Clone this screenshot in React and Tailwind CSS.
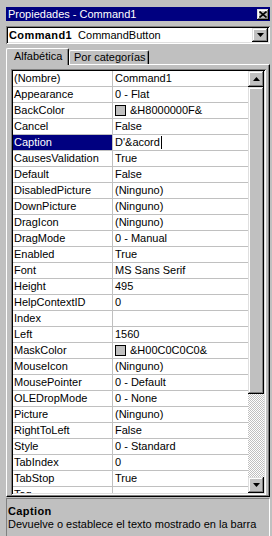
import React from 'react';

const rows = [
  ['(Nombre)', 'Command1'],
  ['Appearance', '0 - Flat'],
  ['BackColor', '&H8000000F&', true],
  ['Cancel', 'False'],
  ['Caption', "D'&acord", false, true],
  ['CausesValidation', 'True'],
  ['Default', 'False'],
  ['DisabledPicture', '(Ninguno)'],
  ['DownPicture', '(Ninguno)'],
  ['DragIcon', '(Ninguno)'],
  ['DragMode', '0 - Manual'],
  ['Enabled', 'True'],
  ['Font', 'MS Sans Serif'],
  ['Height', '495'],
  ['HelpContextID', '0'],
  ['Index', ''],
  ['Left', '1560'],
  ['MaskColor', '&H00C0C0C0&', true],
  ['MouseIcon', '(Ninguno)'],
  ['MousePointer', '0 - Default'],
  ['OLEDropMode', '0 - None'],
  ['Picture', '(Ninguno)'],
  ['RightToLeft', 'False'],
  ['Style', '0 - Standard'],
  ['TabIndex', '0'],
  ['TabStop', 'True'],
  ['Tag', ''],
];

// raised 3d button look
const raised =
  'bg-[#c0c0c0] shadow-[inset_-1px_-1px_0_#000,inset_1px_1px_0_#dfdfdf,inset_-2px_-2px_0_#808080,inset_2px_2px_0_#fff]';

function Arrow({ up }) {
  return (
    <svg width="7" height="4" viewBox="0 0 7 4">
      <polygon points={up ? '3.5,0 7,4 0,4' : '0,0 7,0 3.5,4'} fill="#000" />
    </svg>
  );
}

export default function App() {
  return (
    <div className="w-[272px] h-[536px] overflow-hidden bg-[#c0c0c0] pt-[7px] pl-[6px] pr-[2px] font-['Liberation_Sans',Arial,sans-serif] text-[11px] text-black">
      <div className="flex flex-col">
        {/* Title bar */}
        <div className="h-[14px] bg-[#000080] flex items-center justify-between pl-[2px] pr-[1px]">
          <span className="text-white leading-[14px]">Propiedades - Command1</span>
          <div className={`w-[12px] h-[11px] flex items-center justify-center ${raised}`}>
            <svg width="8" height="7" viewBox="0 0 8 7">
              <path d="M0.5 0.5 L7.5 6.5 M7.5 0.5 L0.5 6.5" stroke="#000" strokeWidth="1.6" />
            </svg>
          </div>
        </div>

        {/* Object combo */}
        <div className="mt-[5px] h-[18px] bg-white p-[2px] shadow-[inset_1px_1px_0_#808080,inset_-1px_-1px_0_#fff,inset_2px_2px_0_#000,inset_-2px_-2px_0_#dfdfdf] flex items-center">
          <div className="flex-1 pl-[1px] leading-[14px] whitespace-nowrap">
            <span className="font-bold tracking-[0.4px]">Command1</span>
            <span className="ml-[6px]">CommandButton</span>
          </div>
          <div className={`w-[16px] h-[14px] flex items-center justify-center ${raised}`}>
            <Arrow />
          </div>
        </div>

        {/* Tabs */}
        <div className="mt-[3px] h-[17px] flex items-end">
          <div className="h-[17px] w-[63px] border-t border-l border-white border-r border-r-black rounded-t-[2px] shadow-[inset_-1px_0_0_#808080] pl-[7px] leading-[15px] relative top-[1px] bg-[#c0c0c0] z-10">
            Alfabética
          </div>
          <div className="h-[14px] w-[80px] border-t border-l border-white border-r border-r-black rounded-t-[2px] shadow-[inset_-1px_0_0_#808080] pl-[4px] leading-[13px]">
            Por categorías
          </div>
        </div>

        {/* Tab page */}
        <div className="h-[433px] border-t border-l border-white border-r border-r-black border-b border-b-black shadow-[inset_-1px_-1px_0_#808080] pt-[4px] pl-[4px] pr-[3px]">
          <div className="h-[426px] bg-white p-[2px] shadow-[inset_1px_1px_0_#808080,inset_-1px_-1px_0_#fff,inset_2px_2px_0_#000,inset_-2px_-2px_0_#dfdfdf] flex">
            <div className="flex-1 overflow-hidden bg-white">
              {rows.map(([name, value, swatch, selected]) => (
                <div key={name} className="h-[16px] flex border-b border-[#c0c0c0]">
                  <div
                    className={`w-[100px] border-r border-[#c0c0c0] pl-[1px] leading-[15px] whitespace-nowrap ${
                      selected ? 'bg-[#000080] text-white' : ''
                    }`}
                  >
                    {name}
                  </div>
                  <div className="flex-1 pl-[2px] leading-[15px] whitespace-nowrap flex items-center">
                    {swatch && (
                      <span className="inline-block w-[11px] h-[11px] border border-black bg-[#c0c0c0] mr-[4px]" />
                    )}
                    <span>{value}</span>
                    {selected && <span className="inline-block w-[1px] h-[13px] bg-black ml-[1px]" />}
                  </div>
                </div>
              ))}
            </div>

            {/* Scrollbar */}
            <div className="w-[16px] flex flex-col">
              <div className={`h-[16px] flex items-center justify-center ${raised}`}>
                <Arrow up />
              </div>
              <div className={`h-[307px] ${raised}`} />
              <div className="flex-1 bg-[repeating-conic-gradient(#fff_0_25%,#c0c0c0_0_50%)] bg-[length:2px_2px]" />
              <div className={`h-[16px] flex items-center justify-center ${raised}`}>
                <Arrow />
              </div>
            </div>
          </div>
        </div>

        {/* Description */}
        <div className="mt-[1px] h-[60px] border-t border-l border-[#808080] border-r border-r-white pl-[1px] pt-[6px] whitespace-nowrap overflow-hidden">
          <div className="font-bold tracking-[0.4px] leading-[13px]">Caption</div>
          <div className="leading-[13px]">Devuelve o establece el texto mostrado en la barra</div>
        </div>
      </div>
    </div>
  );
}
